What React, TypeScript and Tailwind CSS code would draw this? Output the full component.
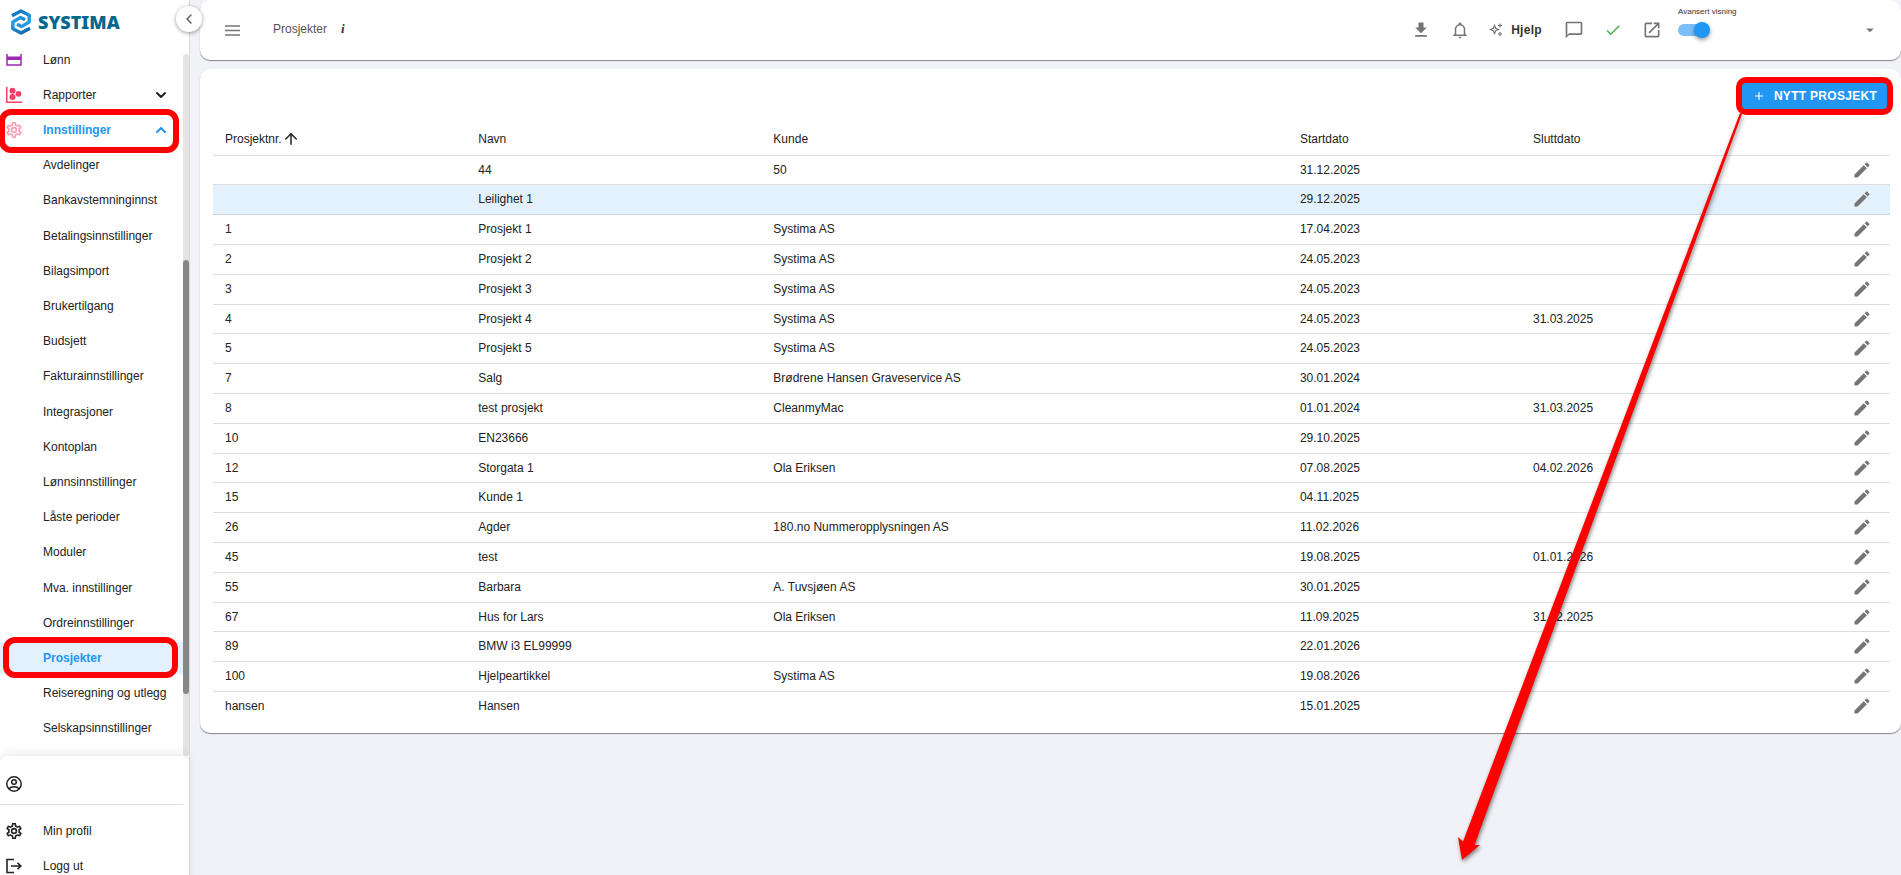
import { ArrowUp, ChevronDown, ChevronLeft, ChevronUp } from "lucide-react";
import {
  MdAdd,
  MdArrowDropDown,
  MdCheck,
  MdDownload,
  MdEdit,
  MdOpenInNew,
  MdOutlineChatBubbleOutline,
} from "react-icons/md";

type Project = {
  nr: string;
  name: string;
  customer: string;
  start: string;
  end: string;
};

const settingsItems = [
  "Avdelinger",
  "Bankavstemninginnst",
  "Betalingsinnstillinger",
  "Bilagsimport",
  "Brukertilgang",
  "Budsjett",
  "Fakturainnstillinger",
  "Integrasjoner",
  "Kontoplan",
  "Lønnsinnstillinger",
  "Låste perioder",
  "Moduler",
  "Mva. innstillinger",
  "Ordreinnstillinger",
  "Prosjekter",
  "Reiseregning og utlegg",
  "Selskapsinnstillinger",
];

const projects: Project[] = [
  { nr: "", name: "44", customer: "50", start: "31.12.2025", end: "" },
  { nr: "", name: "Leilighet 1", customer: "", start: "29.12.2025", end: "" },
  { nr: "1", name: "Prosjekt 1", customer: "Systima AS", start: "17.04.2023", end: "" },
  { nr: "2", name: "Prosjekt 2", customer: "Systima AS", start: "24.05.2023", end: "" },
  { nr: "3", name: "Prosjekt 3", customer: "Systima AS", start: "24.05.2023", end: "" },
  { nr: "4", name: "Prosjekt 4", customer: "Systima AS", start: "24.05.2023", end: "31.03.2025" },
  { nr: "5", name: "Prosjekt 5", customer: "Systima AS", start: "24.05.2023", end: "" },
  { nr: "7", name: "Salg", customer: "Brødrene Hansen Graveservice AS", start: "30.01.2024", end: "" },
  { nr: "8", name: "test prosjekt", customer: "CleanmyMac", start: "01.01.2024", end: "31.03.2025" },
  { nr: "10", name: "EN23666", customer: "", start: "29.10.2025", end: "" },
  { nr: "12", name: "Storgata 1", customer: "Ola Eriksen", start: "07.08.2025", end: "04.02.2026" },
  { nr: "15", name: "Kunde 1", customer: "", start: "04.11.2025", end: "" },
  { nr: "26", name: "Agder", customer: "180.no Nummeropplysningen AS", start: "11.02.2026", end: "" },
  { nr: "45", name: "test", customer: "", start: "19.08.2025", end: "01.01.2026" },
  { nr: "55", name: "Barbara", customer: "A. Tuvsjøen AS", start: "30.01.2025", end: "" },
  { nr: "67", name: "Hus for Lars", customer: "Ola Eriksen", start: "11.09.2025", end: "31.12.2025" },
  { nr: "89", name: "BMW i3 EL99999", customer: "", start: "22.01.2026", end: "" },
  { nr: "100", name: "Hjelpeartikkel", customer: "Systima AS", start: "19.08.2026", end: "" },
  { nr: "hansen", name: "Hansen", customer: "", start: "15.01.2025", end: "" },
];

const COG_PATH =
  "M12,8A4,4 0 0,1 16,12A4,4 0 0,1 12,16A4,4 0 0,1 8,12A4,4 0 0,1 12,8M12,10A2,2 0 0,0 10,12A2,2 0 0,0 12,14A2,2 0 0,0 14,12A2,2 0 0,0 12,10M10,22C9.75,22 9.54,21.82 9.5,21.58L9.13,18.93C8.5,18.68 7.96,18.34 7.44,17.94L4.95,18.95C4.73,19.03 4.46,18.95 4.34,18.73L2.34,15.27C2.21,15.05 2.27,14.78 2.46,14.63L4.57,12.97L4.5,12L4.57,11L2.46,9.37C2.27,9.22 2.21,8.95 2.34,8.73L4.34,5.27C4.46,5.05 4.73,4.96 4.95,5.05L7.44,6.05C7.96,5.66 8.5,5.32 9.13,5.07L9.5,2.42C9.54,2.18 9.75,2 10,2H14C14.25,2 14.46,2.18 14.5,2.42L14.87,5.07C15.5,5.32 16.04,5.66 16.56,6.05L19.05,5.05C19.27,4.96 19.54,5.05 19.66,5.27L21.66,8.73C21.79,8.95 21.73,9.22 21.54,9.37L19.43,11L19.5,12L19.43,13L21.54,14.63C21.73,14.78 21.79,15.05 21.66,15.27L19.66,18.73C19.54,18.95 19.27,19.04 19.05,18.95L16.56,17.95C16.04,18.34 15.5,18.68 14.87,18.93L14.5,21.58C14.46,21.82 14.25,22 14,22H10M11.25,4L10.88,6.61C9.68,6.86 8.62,7.5 7.85,8.39L5.44,7.35L4.69,8.65L6.8,10.2C6.4,11.37 6.4,12.64 6.8,13.8L4.68,15.36L5.43,16.66L7.86,15.62C8.63,16.5 9.68,17.14 10.87,17.38L11.24,20H12.76L13.13,17.39C14.32,17.14 15.37,16.5 16.14,15.62L18.57,16.66L19.32,15.36L17.2,13.81C17.6,12.64 17.6,11.37 17.2,10.2L19.31,8.65L18.56,7.35L16.15,8.39C15.38,7.5 14.32,6.86 13.12,6.62L12.75,4H11.25Z";

function CogIcon({ className }: { className: string }) {
  return (
    <svg viewBox="2 2 20 20" className={className} fill="currentColor">
      <path d={COG_PATH} />
    </svg>
  );
}

function Logo() {
  return (
    <a href="#" className="flex items-center gap-[7px] pl-[11px]">
      <svg viewBox="0 0 20 26" className="h-[26px] w-5" fill="none" strokeWidth="3.4" strokeLinejoin="round">
        <defs>
          <linearGradient id="logoTop" x1="0" y1="0" x2="1" y2="1">
            <stop offset="0" stopColor="#0b6fb8" />
            <stop offset="1" stopColor="#2aa5ec" />
          </linearGradient>
          <linearGradient id="logoBottom" x1="0" y1="0" x2="1" y2="1">
            <stop offset="0" stopColor="#2aa5ec" />
            <stop offset="1" stopColor="#0a5ea8" />
          </linearGradient>
        </defs>
        <path d="M1 6.8L10 2L18.2 6.3V13L10.5 17.6L6 15.2" stroke="url(#logoTop)" />
        <path d="M19 19.2L10 24L1.8 19.7V13L9.5 8.4L14 10.8" stroke="url(#logoBottom)" />
      </svg>
      <span className="font-['Noto_Sans',sans-serif] text-lg leading-6 font-black text-[#04678f]">SYSTIMA</span>
    </a>
  );
}

function Sidebar() {
  return (
    <aside className="relative flex h-full w-[190px] shrink-0 flex-col border-r border-[#d9d9de] bg-white">
      <div className="flex h-[54px] shrink-0 items-start pt-[9px]">
        <Logo />
      </div>
      <button
        type="button"
        aria-label="Skjul meny"
        className="absolute top-[6px] -right-[13px] z-10 flex size-[26px] items-center justify-center rounded-full bg-white text-[#555] shadow-[0_1px_4px_rgba(0,0,0,0.4)]"
      >
        <ChevronLeft className="size-4" />
      </button>

      <div className="flex min-h-0 flex-1">
        <nav className="min-w-0 flex-1 overflow-hidden">
          <a href="#" className="-mt-3 flex h-[35px] items-center">
            <svg viewBox="0 0 16 16" className="ml-1.5 size-4 shrink-0" fill="none">
              <path d="M1 1H15V13H1Z" stroke="#9c27b0" strokeWidth="1.5" />
              <path d="M1 4.5H15V8H1Z" fill="#9c27b0" />
            </svg>
            <span className="pl-[21px]">Lønn</span>
          </a>
          <a href="#" className="flex h-[35px] items-center">
            <svg viewBox="0 0 16 16" className="ml-1.5 size-4 shrink-0" fill="#f43f68">
              <path d="M0 0H1.5V14.5H16V16H0Z" />
              <circle cx="6.5" cy="3.8" r="3" />
              <circle cx="12.5" cy="6.8" r="2.9" />
              <circle cx="6.5" cy="10" r="3" />
            </svg>
            <span className="flex-1 pl-[21px]">Rapporter</span>
            <ChevronDown className="mr-[14px] size-4" strokeWidth={3} />
          </a>
          <a href="#" className="relative flex h-[35px] items-center font-bold text-[#2196f3]">
            <CogIcon className="ml-1.5 size-4 shrink-0 text-[#ff9db0]" />
            <span className="flex-1 pl-[21px]">Innstillinger</span>
            <ChevronUp className="mr-[14px] size-4" strokeWidth={3} />
            <span className="absolute -top-[3px] -left-px h-11 w-[180px] rounded-xl border-6 border-[#ff0000]" />
          </a>
          <ul className="mt-0.5">
            {settingsItems.map((item) => (
              <li key={item} className="relative h-[35px] [&:nth-child(5n+2)]:mb-px">
                <a
                  href="#"
                  className={
                    item === "Prosjekter"
                      ? "flex h-8 items-center bg-[#e3f1fd] pl-[43px] font-bold text-[#2196f3]"
                      : "flex h-8 items-center pl-[43px]"
                  }
                >
                  {item}
                </a>
                {item === "Prosjekter" && (
                  <span className="absolute -top-[5px] left-[3px] z-10 h-[41px] w-[175px] rounded-xl border-6 border-[#ff0000]" />
                )}
              </li>
            ))}
          </ul>
        </nav>
        <div className="w-1.5 shrink-0 rounded-full bg-[#e3e3e3] pt-[206px]">
          <div className="h-[434px] rounded-full bg-[#868888]" />
        </div>
      </div>

      <div className="-mb-2 shrink-0 rounded-t-lg bg-white shadow-[0_-3px_10px_rgba(0,0,0,0.08)]">
        <div className="mr-1.5 flex h-[49px] items-center border-b border-[#e0e0e0] pt-2 pl-1.5">
          <svg viewBox="0 0 16 16" className="size-4" fill="none" stroke="#222" strokeWidth="1.5">
            <circle cx="8" cy="8" r="7.2" />
            <circle cx="8" cy="6" r="2.3" />
            <path d="M3 12.8C5 10.2 11 10.2 13 12.8" />
          </svg>
        </div>
        <a href="#" className="mt-2 flex h-[35px] items-center pl-1.5">
          <CogIcon className="size-4" />
          <span className="pl-[21px]">Min profil</span>
        </a>
        <a href="#" className="flex h-[35px] items-center pl-1.5">
          <svg viewBox="0 0 16 16" className="size-4" fill="none" stroke="#222" strokeWidth="1.6">
            <path d="M8 1.5H1V14.5H8M5 8H15M11.5 4.8L14.8 8L11.5 11.2" />
          </svg>
          <span className="pl-[21px]">Logg ut</span>
        </a>
      </div>
    </aside>
  );
}

function TopBar() {
  return (
    <header className="flex h-[60px] items-center rounded-[10px] bg-white pr-[22px] pl-[25px] text-[#757575] shadow-[0_1px_1px_rgba(0,0,0,0.45)]">
      <button type="button" aria-label="Meny">
        <svg viewBox="0 0 15 11" className="h-[11px] w-[15px]" stroke="currentColor" strokeWidth="1.3">
          <path d="M0 1H15M0 5.5H15M0 10H15" />
        </svg>
      </button>
      <h1 className="pb-0.5 pl-[33px] text-[#555]">Prosjekter</h1>
      <span className="pb-0.5 pl-3.5 font-['Liberation_Serif',serif] text-[13px] font-bold text-[#333] italic">i</span>

      <div className="ml-auto flex h-full items-center">
        <button type="button" aria-label="Last ned">
          <MdDownload className="size-5" />
        </button>
        <button type="button" aria-label="Varsler" className="ml-5">
          <svg viewBox="0 0 24 24" className="size-[18px]" fill="currentColor">
            <path d="M10 21H14C14 22.1 13.1 23 12 23S10 22.1 10 21M21 19V20H3V19L5 17V11C5 7.9 7 5.2 10 4.3V4C10 2.9 10.9 2 12 2S14 2.9 14 4V4.3C17 5.2 19 7.9 19 11V17L21 19M17 11C17 8.2 14.8 6 12 6S7 8.2 7 11V18H17V11Z" />
          </svg>
        </button>
        <button type="button" className="ml-5 flex items-center gap-2 font-bold tracking-wide text-[#333]">
          <svg viewBox="0 0 14 14" className="size-3.5" fill="none" stroke="#757575">
            <path d="M5.5 2.5L6.7 5.3L9.5 6.5L6.7 7.7L5.5 10.5L4.3 7.7L1.5 6.5L4.3 5.3Z" strokeWidth="1.2" />
            <path d="M11 0.5V4.5M9 2.5H13M11 9V13M9 11H13" strokeWidth="1.2" />
          </svg>
          Hjelp
        </button>
        <button type="button" aria-label="Meldinger" className="ml-[22px]">
          <MdOutlineChatBubbleOutline className="size-5" />
        </button>
        <button type="button" aria-label="Status" className="ml-5 text-[#4caf50]">
          <MdCheck className="size-[18px]" />
        </button>
        <button type="button" aria-label="Åpne i nytt vindu" className="ml-5">
          <MdOpenInNew className="size-5" />
        </button>
        <label className="ml-4 flex w-[61px] flex-col gap-1 self-start pt-1.5 text-[8px] leading-3 whitespace-nowrap text-[#333]">
          Avansert visning
          <span className="relative flex h-4 w-8 items-center">
            <input type="checkbox" defaultChecked className="peer sr-only" />
            <span className="h-3 w-7 rounded-full bg-[#7abffa]" />
            <span className="absolute top-0 right-0 size-4 rounded-full bg-[#2196f3] shadow-[0_2px_4px_rgba(0,0,0,0.4)]" />
          </span>
        </label>
        <div className="relative ml-4 h-8 w-[124px]">
          <select aria-label="Velg firma" className="size-full appearance-none">
            <option value="" />
          </select>
          <MdArrowDropDown className="pointer-events-none absolute top-[7px] right-0 size-[18px]" />
        </div>
      </div>
    </header>
  );
}

function ProjectTable() {
  return (
    <table className="mt-[14px] w-full table-fixed text-left">
      <thead>
        <tr className="h-8 border-b border-[#dedede]">
          <th className="w-[15.1%] pl-3 font-medium">
            <span className="flex items-center">
              Prosjektnr. <ArrowUp className="size-[18px]" />
            </span>
          </th>
          <th className="w-[17.6%] pl-3 font-medium">Navn</th>
          <th className="w-[31.4%] pl-3 font-medium">Kunde</th>
          <th className="w-[13.9%] pl-3 font-medium">Startdato</th>
          <th className="pl-3 font-medium">Sluttdato</th>
          <th className="w-[38px]" />
        </tr>
      </thead>
      <tbody>
        {projects.map((project) => (
          <tr
            key={project.name}
            className={
              project.name === "Leilighet 1"
                ? "h-[30px] border-b border-[#c8d5df] bg-[#e3f1fc]"
                : "h-[30px] border-b border-[#dedede] last:border-b-0 [&:nth-child(5n+1)]:h-[29px]"
            }
          >
            <td className="pl-3">{project.nr}</td>
            <td className="pl-3">{project.name}</td>
            <td className="pl-3">{project.customer}</td>
            <td className="pl-3">{project.start}</td>
            <td className="pl-3">{project.end}</td>
            <td>
              <button type="button" aria-label={`Rediger ${project.name}`} className="block text-[#757575]">
                <MdEdit className="size-5" />
              </button>
            </td>
          </tr>
        ))}
      </tbody>
    </table>
  );
}

function PointerArrow() {
  return (
    <svg
      viewBox="0 0 460 875"
      className="pointer-events-none absolute top-0 right-0 z-20 h-[875px] w-[460px] drop-shadow-[1px_2px_2px_rgba(0,0,0,0.5)]"
      fill="#ff0000"
    >
      <path d="M299 113L301 114L33.5 845H39L21 860L17 837L22 841.5Z" />
    </svg>
  );
}

export default function App() {
  return (
    <div className="relative flex h-screen overflow-hidden bg-[#f1f2f7] font-['Liberation_Sans',Arial,sans-serif] text-[12px] leading-4 text-[#222]">
      <Sidebar />
      <main className="min-w-0 flex-1 pl-2.5">
        <TopBar />
        <section className="mt-[9px] rounded-[10px] bg-white pt-[14px] pr-[11px] pb-3 pl-[13px] shadow-[0_1px_1px_rgba(0,0,0,0.45)]">
          <div className="flex justify-end pr-[3px]">
            <button
              type="button"
              className="relative flex h-[26px] w-[145px] items-center justify-center gap-2 bg-[#2196f3] font-bold tracking-wide whitespace-nowrap text-white"
            >
              <MdAdd className="size-3.5 shrink-0" />
              NYTT PROSJEKT
              <span className="absolute -inset-1.5 rounded-[10px] border-6 border-[#ff0000]" />
            </button>
          </div>
          <ProjectTable />
        </section>
      </main>
      <PointerArrow />
    </div>
  );
}
